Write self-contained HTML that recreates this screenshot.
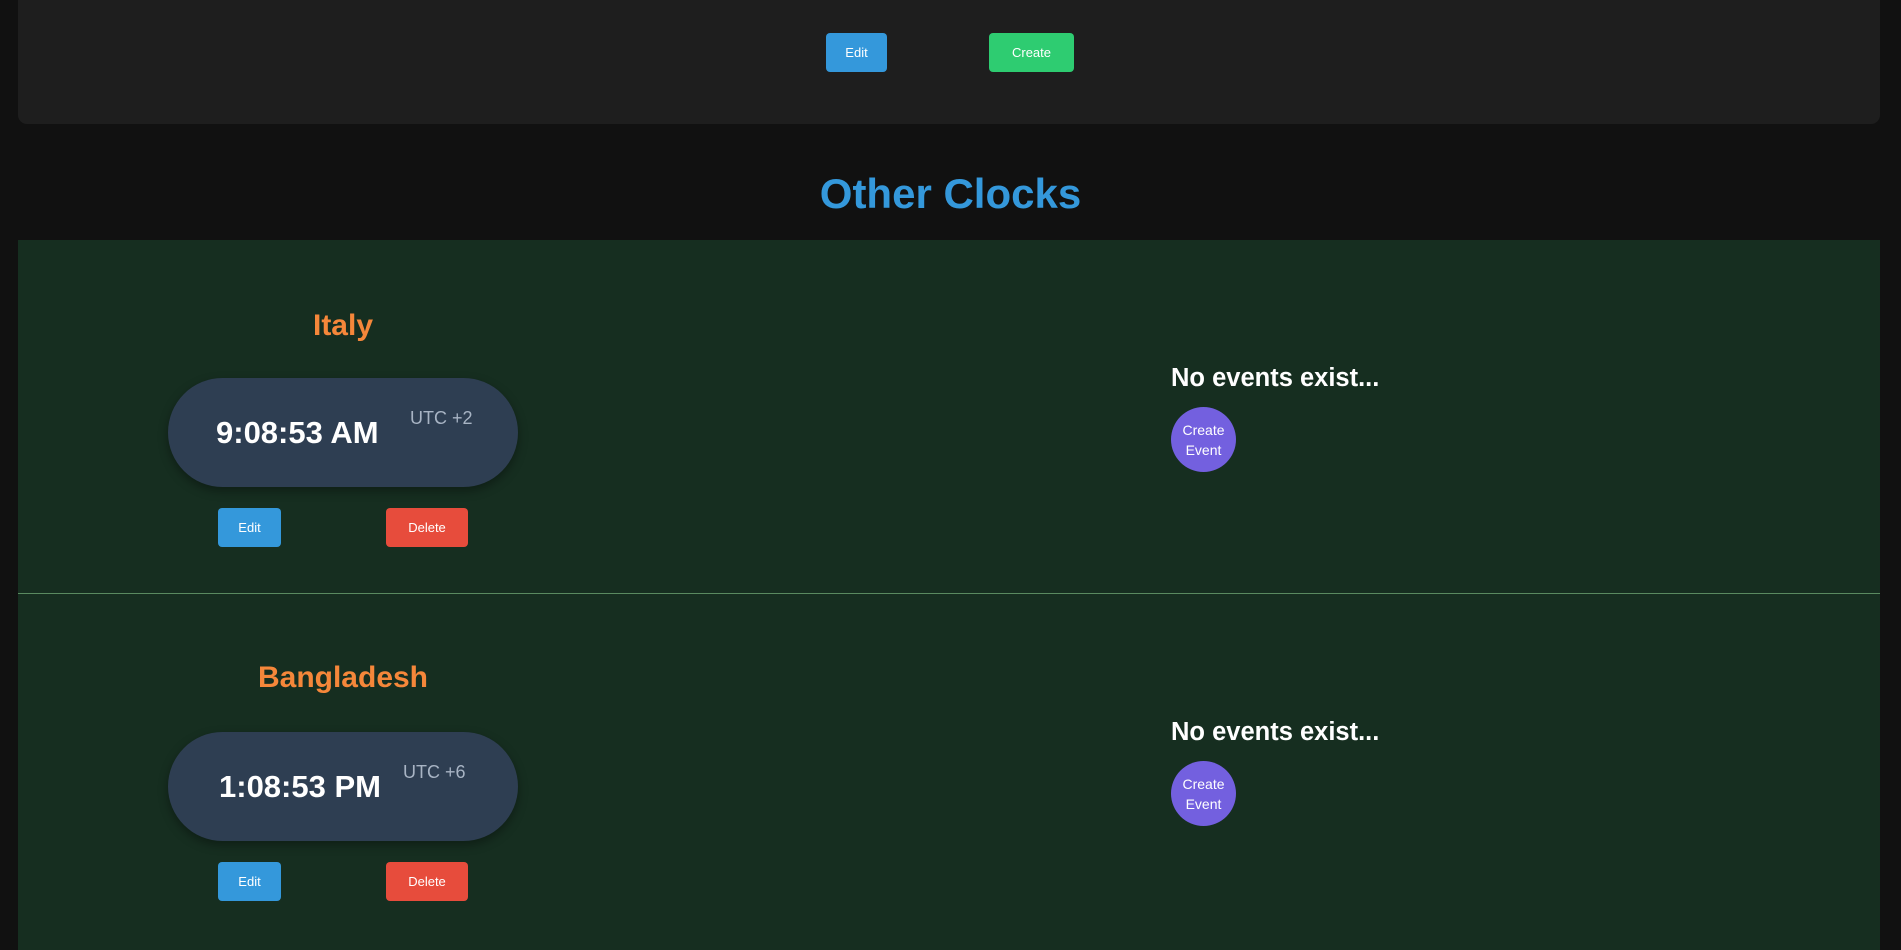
<!DOCTYPE html>
<html><head><meta charset="utf-8"><style>
*{margin:0;padding:0;box-sizing:border-box}
body{width:1901px;height:942px;background:#111111;font-family:"Liberation Sans",Arial,sans-serif;position:relative;overflow:hidden}
.a{position:absolute}
.btn{position:absolute;color:#fff;font-size:13px;display:flex;align-items:center;justify-content:center;border-radius:4px}
.top{left:18px;top:-10px;width:1862px;height:134px;background:#1e1e1e;border-radius:9px}
.green{left:18px;top:240px;width:1862px;height:710px;background:#162e20}
.sep{left:18px;top:593px;width:1862px;height:1px;background:#5a8a60}
.title{left:0;width:1901px;top:170px;text-align:center;color:#3498db;font-weight:bold;font-size:42px}
.country{width:350px;left:168px;text-align:center;color:#f5873a;font-weight:bold;font-size:30px}
.pill{left:168px;width:350px;height:109px;background:#2e3e52;border-radius:55px;box-shadow:0 4px 10px rgba(0,0,0,.35)}
.time{color:#fff;font-weight:bold;font-size:31px}
.utc{color:#a8b4c4;font-size:18px}
.ne{left:1171px;color:#fff;font-weight:bold;font-size:25.5px}
.ce{left:1171px;width:65px;height:65px;border-radius:50%;background:#7360df;color:#fff;font-size:14px;text-align:center;line-height:20px;display:flex;align-items:center;justify-content:center}
</style></head><body>
<div class="a top"></div>
<div class="btn" style="left:826px;top:33px;width:61px;height:39px;background:#3498db">Edit</div>
<div class="btn" style="left:989px;top:33px;width:85px;height:39px;background:#2ecc71">Create</div>
<div class="a title">Other Clocks</div>
<div class="a green"></div>
<div class="a sep"></div>

<div class="a country" style="top:309px">Italy</div>
<div class="a pill" style="top:378px"></div>
<div class="a time" style="left:216px;top:415px">9:08:53 AM</div>
<div class="a utc" style="left:410px;top:408px">UTC +2</div>
<div class="btn" style="left:218px;top:508px;width:63px;height:39px;background:#3498db">Edit</div>
<div class="btn" style="left:386px;top:508px;width:82px;height:39px;background:#e74c3c">Delete</div>
<div class="a ne" style="top:364px">No events exist...</div>
<div class="a ce" style="top:407px">Create<br>Event</div>

<div class="a country" style="top:661px">Bangladesh</div>
<div class="a pill" style="top:732px"></div>
<div class="a time" style="left:219px;top:769px">1:08:53 PM</div>
<div class="a utc" style="left:403px;top:762px">UTC +6</div>
<div class="btn" style="left:218px;top:862px;width:63px;height:39px;background:#3498db">Edit</div>
<div class="btn" style="left:386px;top:862px;width:82px;height:39px;background:#e74c3c">Delete</div>
<div class="a ne" style="top:718px">No events exist...</div>
<div class="a ce" style="top:761px">Create<br>Event</div>
</body></html>
